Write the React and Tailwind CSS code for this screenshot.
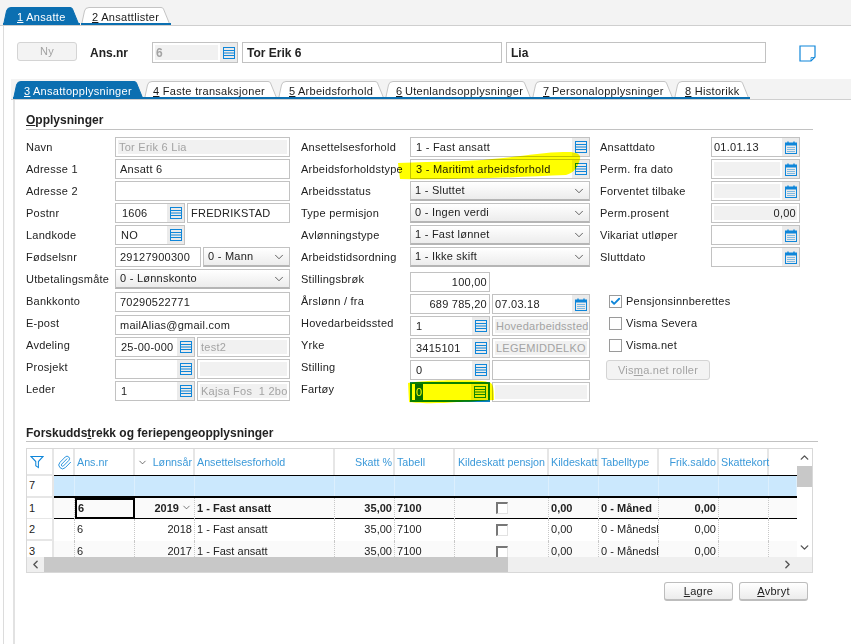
import React from 'react';
import { Paperclip, ChevronDown, ChevronUp, ChevronLeft, ChevronRight, Check } from 'lucide-react';

const BLUE = '#0f86d9';

function ListIcon() {
  return (
    <svg width="12" height="12" viewBox="0 0 12 12" fill="none" stroke={BLUE} strokeWidth="1">
      <rect x="0.5" y="0.5" width="11" height="11" />
      <path d="M0 3.5H12M0 6H12M0 8.5H12" />
    </svg>
  );
}

function CalendarIcon() {
  return (
    <svg width="12" height="13" viewBox="0 0 12 13" fill="none">
      <rect x="0.5" y="2" width="11" height="10.5" stroke={BLUE} />
      <rect x="0" y="2" width="12" height="2.5" fill={BLUE} />
      <path d="M3 0.5V3M9 0.5V3" stroke={BLUE} strokeWidth="1.4" />
      <path d="M2.5 6.5H10M2.5 8.5H10M2.5 10.5H10" stroke={BLUE} strokeDasharray="1 1" />
    </svg>
  );
}

function FilterIcon() {
  return (
    <svg width="14" height="14" viewBox="0 0 15 15" fill="none" stroke={BLUE} strokeWidth="1.1">
      <path d="M1 1.5H14L9 7V13.5L6.2 11.5V7Z" />
    </svg>
  );
}

function NoteIcon() {
  return (
    <svg width="17" height="17" viewBox="0 0 17 17" fill="none" stroke={BLUE} strokeWidth="1.2">
      <path d="M1 1H16V12L12 16H1Z" />
      <path d="M12 16V12.5H16" strokeWidth="0.8" />
    </svg>
  );
}

function Tab({ width, active, num, text, spaced, pad = 'pl-[11px]' }) {
  const h = 18;
  const d = `M0.5 ${h}L3.5 4Q4.2 0.5 8 0.5H${width - 10}Q${width - 8} 0.5 ${width - 7.5} 2L${width - 1} ${h}`;
  return (
    <div className="relative h-[18px] shrink-0" style={{ width }}>
      <svg className="absolute left-0 top-0" width={width} height={h} fill={active ? '#0b6fb1' : '#fff'} stroke={active ? '#0b6fb1' : '#c4c4c4'}>
        <path d={d} />
        <rect x="0" y="16" width={width} height="2" fill="#0b6fb1" stroke="none" />
      </svg>
      <div className={`relative ${pad} pt-[3px] leading-[14px] whitespace-nowrap text-[11px] tracking-[0.3px] ${active ? 'text-white' : 'text-[#1c1c1c]'}`}>
        <u>{num}</u>
        {spaced ? ' ' : '\u2009'}
        {text}
      </div>
    </div>
  );
}

function Lookup({ date }) {
  return (
    <div className="w-[17px] h-full shrink-0 bg-[#ebebeb] flex items-center justify-center">
      {date ? <CalendarIcon /> : <ListIcon />}
    </div>
  );
}

function Field({ value, w = 'flex-1', gray, right, lookup, date, pad = 'px-1', muted, bold }) {
  return (
    <div className={`${w} h-[20px] min-w-0 border border-[#c2c2c2] flex bg-white`}>
      <div className={`flex-1 min-w-0 flex items-center whitespace-pre ${gray ? 'm-[2px] bg-[#f1f1f1] px-[1px]' : `${pad} overflow-hidden`} ${right ? 'justify-end' : ''} ${muted ? 'text-[#a3a3a3]' : ''} ${bold ? 'font-bold text-[12px] tracking-normal' : ''}`}>
        {value}
      </div>
      {(lookup || date) && <Lookup date={date} />}
    </div>
  );
}

function Select({ value, w = 'flex-1' }) {
  return (
    <div className={`${w} h-[20px] border border-[#c2c2c2] border-b-2 border-b-[#b5b5b5] bg-gradient-to-b from-white to-[#ececec] flex items-center justify-between pl-1 pr-[3px]`}>
      <span className="whitespace-nowrap">{value}</span>
      <ChevronDown size={14} strokeWidth={1.3} color="#333" />
    </div>
  );
}

function Row({ label, width, up = '', children }) {
  return (
    <div className="flex h-[20px] gap-0 relative">
      <div className={`${width} shrink-0 flex items-center whitespace-nowrap ${up}`}>{label}</div>
      <div className="flex-1 flex gap-[2px] min-w-0">{children}</div>
    </div>
  );
}

function CheckRow({ label, checked }) {
  return (
    <div className="flex items-center gap-[4px] h-[13px] pl-[3px]">
      <div className="w-[13px] h-[13px] border border-[#9a9a9a] flex items-center justify-center bg-white">
        {checked && <Check size={11} strokeWidth={4} color={BLUE} />}
      </div>
      <span className="whitespace-nowrap">{label}</span>
    </div>
  );
}

function FirstColumn() {
  const w = 'w-[89px]';
  return (
    <div className="w-[264px] shrink-0 flex flex-col gap-[2px]">
      <Row label="Navn" width={w}><Field value="Tor Erik 6 Lia" gray muted /></Row>
      <Row label="Adresse 1" width={w}><Field value="Ansatt 6" /></Row>
      <Row label="Adresse 2" width={w}><Field value="" /></Row>
      <Row label="Postnr" width={w}>
        <Field value="1606" w="w-[70px]" lookup pad="px-[6px]" />
        <Field value="FREDRIKSTAD" pad="px-[3px]" />
      </Row>
      <Row label="Landkode" width={w}><Field value="NO" w="w-[70px]" lookup pad="px-[5px]" /><div className="flex-1" /></Row>
      <Row label="Fødselsnr" width={w}>
        <Field value="29127900300" w="w-[86px]" />
        <Select value="0 - Mann" />
      </Row>
      <Row label="Utbetalingsmåte" width={w}><Select value="0 - Lønnskonto" /></Row>
      <div className="mt-[1px]">
        <Row label="Bankkonto" width={w} up="pb-[2px]"><Field value="70290522771" /></Row>
      </div>
      <div className="mt-[1px]">
        <Row label="E-post" width={w} up="pb-[4px]"><Field value="mailAlias@gmail.com" /></Row>
      </div>
      <Row label="Avdeling" width={w} up="pb-[4px]">
        <Field value="25-00-000" w="w-[80px]" lookup pad="px-[5px]" />
        <Field value="test2" gray muted />
      </Row>
      <Row label="Prosjekt" width={w} up="pb-[4px]">
        <Field value="" w="w-[80px]" lookup />
        <Field value="" gray />
      </Row>
      <Row label="Leder" width={w} up="pb-[4px]">
        <Field value="1" w="w-[80px]" lookup pad="px-[5px]" />
        <Field value="Kajsa Fos  1 2bo" gray muted />
      </Row>
    </div>
  );
}

function SecondColumn() {
  const w = 'w-[109px]';
  const up = 'pb-[6px]';
  return (
    <div className="w-[299px] pr-[10px] shrink-0 flex flex-col gap-[2px]">
      <Row label="Ansettelsesforhold" width={w}><Field value="1 - Fast ansatt" lookup pad="px-[5px]" /></Row>
      <Row label="Arbeidsforholdstype" width={w}>
        <Field value="3 - Maritimt arbeidsforhold" lookup pad="px-[5px]" />
        {/* marker stroke drawn on top of the screenshot */}
        <svg className="absolute left-[97px] top-[-8px] mix-blend-multiply pointer-events-none" width="184" height="30" viewBox="0 0 184 30">
          <path d="M0 12C40 10 70 11 94 8C120 6 150 0 170 1C180 1 183 4 182 8C180 16 176 22 168 24C120 26 60 29 2 28Z" fill="#ffff00" />
        </svg>
      </Row>
      <Row label="Arbeidsstatus" width={w}><Select value="1 - Sluttet" /></Row>
      <Row label="Type permisjon" width={w}><Select value="0 - Ingen verdi" /></Row>
      <Row label="Avlønningstype" width={w}><Select value="1 - Fast lønnet" /></Row>
      <Row label="Arbeidstidsordning" width={w}><Select value="1 - Ikke skift" /></Row>
      <div className="mt-[3px]">
        <Row label="Stillingsbrøk" width={w} up={up}>
          <Field value="100,00" w="w-[80px]" right pad="px-[2px]" /><div className="flex-1" />
        </Row>
      </div>
      <Row label="Årslønn / fra" width={w} up={up}>
        <Field value="689 785,20" w="w-[80px]" right pad="px-[2px]" />
        <Field value="07.03.18" date pad="px-[2px]" />
      </Row>
      <Row label="Hovedarbeidssted" width={w} up={up}>
        <Field value="1" w="w-[80px]" lookup pad="px-[5px]" />
        <Field value="Hovedarbeidssted" gray muted />
      </Row>
      <Row label="Yrke" width={w} up={up}>
        <Field value="3415101" w="w-[80px]" lookup pad="px-[5px]" />
        <Field value="LEGEMIDDELKO" gray muted />
      </Row>
      <Row label="Stilling" width={w} up={up}>
        <Field value="0" w="w-[80px]" lookup pad="px-[5px]" />
        <Field value="" />
      </Row>
      <Row label="Fartøy" width={w} up={up}>
        <div className="w-[80px] h-[20px] border-2 border-[#0a7fc8] flex bg-white">
          <div className="flex-1 flex items-center pl-[3px]">
            <span className="bg-[#0a6cc8] text-white px-[1px]">0</span>
          </div>
          <Lookup />
        </div>
        <Field value="" gray />
        <svg className="absolute left-[106px] top-[-2px] mix-blend-multiply pointer-events-none" width="88" height="24" viewBox="0 0 88 24">
          <path d="M1 3C10 0 78 -1 80 2C86 2 87 6 87 20C70 21 60 22 50 22C30 24 4 23 2 22Z" fill="#ffff00" />
        </svg>
      </Row>
    </div>
  );
}

function ThirdColumn() {
  const w = 'w-[111px]';
  return (
    <div className="w-[200px] shrink-0 flex flex-col gap-[2px]">
      <Row label="Ansattdato" width={w}><Field value="01.01.13" date pad="px-[2px]" /></Row>
      <Row label="Perm. fra dato" width={w}><Field value="" gray date /></Row>
      <Row label="Forventet tilbake" width={w}><Field value="" gray date /></Row>
      <Row label="Perm.prosent" width={w}><Field value="0,00" gray right /></Row>
      <Row label="Vikariat utløper" width={w}><Field value="" date /></Row>
      <Row label="Sluttdato" width={w}><Field value="" date /></Row>
      <div className="flex flex-col gap-[9px] mt-[26px] pl-[6px]">
        <CheckRow label="Pensjonsinnberettes" checked />
        <CheckRow label="Visma Severa" />
        <CheckRow label="Visma.net" />
      </div>
      <div className="mt-[6px] pl-[6px]">
        <div className="w-[104px] h-[20px] border border-[#d4d4d4] rounded-[3px] bg-[#f3f3f3] text-[#a3a3a3] flex items-center justify-center">
          <span>Vis<u>m</u>a.net roller</span>
        </div>
      </div>
    </div>
  );
}

// column widths for header and data rows of the grid
const GRID = 'grid grid-cols-[27px_21px_60px_60px_140px_60px_60px_94px_50px_60px_60px_50px_28px]';

const rows = [
  { n: '1', bg: 'bg-[#fafafa]', h: 'h-[21px] border-b border-black', year: '2019', bold: true, type: '0 - Måned' },
  { n: '2', bg: 'bg-white', h: 'h-[22px]', year: '2018', type: '0 - Månedsl' },
  { n: '3', bg: 'bg-[#fafafa]', h: 'h-[22px]', year: '2017', type: '0 - Månedsl' },
];

const cell = 'border-r border-dotted border-[#c8c8c8] flex items-center px-[2px] pb-[1px] overflow-hidden whitespace-nowrap';
const headCell = 'border-r-2 border-[#e6e6e6] flex items-center pl-[2px] pr-[1px] whitespace-nowrap text-[#3b99d9] text-[10.7px]';

function DataRow({ row }) {
  return (
    <div className={`${GRID} ${row.h} ${row.bg} ${row.bold ? 'font-bold' : ''}`}>
      <div className={`relative z-10 bg-white border-r-2 border-b-2 border-[#e6e6e6] flex items-center pl-[2px] font-normal ${row.bold ? '-mb-[1px]' : ''}`}>{row.n}</div>
      <div className={cell} />
      <div className={row.bold ? 'border-2 border-black flex items-center px-[1px]' : cell}>6</div>
      <div className={`${cell} justify-end`}>
        {row.year}
        {row.bold && <ChevronDown size={11} strokeWidth={1.4} color="#333" className="ml-[2px]" />}
      </div>
      <div className={cell}>1 - Fast ansatt</div>
      <div className={`${cell} justify-end`}>35,00</div>
      <div className={cell}>7100</div>
      <div className={`${cell} justify-center`}>
        <div className="w-[12px] h-[12px] border-t-2 border-l-2 border-[#777] border-r border-b border-r-[#e2e2e2] border-b-[#e2e2e2] bg-white" />
      </div>
      <div className={cell}>0,00</div>
      <div className={cell}>{row.type}</div>
      <div className={`${cell} justify-end`}>0,00</div>
      <div className={cell} />
      <div />
    </div>
  );
}

function EmployeeGrid() {
  return (
    <div className="w-[787px] h-[125px] border border-[#d8d8d8] flex flex-col bg-white tracking-[0.02px]">
      <div className="flex h-[108px] shrink-0">
        <div className="w-[770px] overflow-hidden shrink-0">
          <div className={`${GRID} h-[27px] border-b border-black`}>
            <div className={`${headCell} relative z-10 bg-white -mb-[1px] border-b-2 pl-[3px]`}><FilterIcon /></div>
            <div className={`${headCell} justify-center`}><Paperclip size={15} strokeWidth={1.4} color={BLUE} /></div>
            <div className={headCell}>Ans.nr</div>
            <div className={`${headCell} justify-between`}>
              <ChevronDown size={11} strokeWidth={1.5} color="#333" />
              Lønnsår
            </div>
            <div className={headCell}>Ansettelsesforhold</div>
            <div className={`${headCell} justify-end`}>Skatt %</div>
            <div className={headCell}>Tabell</div>
            <div className={`${headCell} justify-center`}>Kildeskatt pensjon</div>
            <div className={headCell}>Kildeskatt</div>
            <div className={headCell}>Tabelltype</div>
            <div className={`${headCell} justify-end`}>Frik.saldo</div>
            <div className={headCell}>Skattekort</div>
            <div />
          </div>
          <div className={`${GRID} h-[22px] border-b-2 border-black`}>
            <div className="relative z-10 -mb-[2px] bg-white border-r-2 border-b-2 border-[#e6e6e6] flex items-center pl-[2px] pb-[2px]">7</div>
            {Array.from({ length: 12 }).map((_, i) => (
              <div key={i} className="bg-[#cbe8fd] border-r border-[#dceffd]" />
            ))}
          </div>
          {rows.map((row) => <DataRow key={row.n} row={row} />)}
        </div>
        <div className="flex-1 flex flex-col items-center justify-between relative">
          <ChevronUp size={13} strokeWidth={2.6} color="#555" className="mt-[2px]" />
          <div className="absolute left-0 top-[17px] w-[15px] h-[21px] bg-[#c8c8c8]" />
          <ChevronDown size={13} strokeWidth={2.6} color="#555" className="mb-[3px]" />
        </div>
      </div>
      <div className="flex-1 flex items-center bg-[#efefef]">
        <div className="w-[17px] flex justify-center"><ChevronLeft size={13} strokeWidth={2.6} color="#555" /></div>
        <div className="w-[464px] h-full bg-[#c8c8c8]" />
        <div className="flex-1 flex justify-end pr-[18px]"><ChevronRight size={13} strokeWidth={2.6} color="#555" /></div>
      </div>
    </div>
  );
}

function ActionButton({ first, rest }) {
  return (
    <div className="w-[69px] h-[19px] border border-[#bdbdbd] border-b-2 rounded-[3px] bg-gradient-to-b from-white to-[#ececec] flex items-center justify-center">
      <span><u>{first}</u>{rest}</span>
    </div>
  );
}

export default function App() {
  return (
    <div className="w-[851px] h-[644px] overflow-hidden bg-white flex flex-col text-[11px] tracking-[0.25px] text-[#222] font-['Liberation_Sans',Arial,sans-serif]">
      <div className="h-[26px] shrink-0 bg-[#f3f3f3] border-b border-[#cfcfcf] pt-[7px] pl-[3px] flex gap-[1px]">
        <Tab width={77} active num="1" text="Ansatte" spaced pad="pl-[14px]" />
        <Tab width={90} num="2" text="Ansattlister" spaced />
      </div>
      <div className="flex-1 ml-[3px] border-l border-[#dcdcdc] flex flex-col min-h-0">
        <div className="flex items-start pt-[16px] pl-[13px] h-[53px] shrink-0">
          <div className="w-[60px] h-[19px] border border-[#d4d4d4] rounded-[3px] bg-[#f3f3f3] text-[#a3a3a3] flex items-center justify-center">Ny</div>
          <div className="w-[75px] pl-[13px] h-[21px] flex items-center font-bold text-[12px] tracking-normal">Ans.nr</div>
          <div className="flex gap-[4px] h-[21px] [&>div]:h-[21px]">
            <Field value="6" w="w-[86px]" gray muted lookup bold />
            <Field value="Tor Erik 6" w="w-[260px]" bold />
            <Field value="Lia" w="w-[260px]" bold />
          </div>
          <div className="ml-[33px] mt-[3px]"><NoteIcon /></div>
        </div>
        <div className="ml-[7px] h-[21px] shrink-0 bg-[#f3f3f3] pt-[2px] pl-[2px] flex border-b border-[#cfcfcf]">
          <Tab width={131} active num="3" text="Ansattopplysninger" />
          <Tab width={134} num="4" text="Faste transaksjoner" spaced pad="pl-[9px]" />
          <Tab width={107} num="5" text="Arbeidsforhold" />
          <Tab width={147} num="6" text="Utenlandsopplysninger" />
          <Tab width={142} num="7" text="Personalopplysninger" />
          <Tab width={76} num="8" text="Historikk" spaced />
        </div>
        <div className="flex-1 ml-[9px] border-l-2 border-[#e2e2e2] pl-[11px] pt-[13px] flex flex-col min-h-0">
          <div className="w-[787px] h-[17px] border-b border-[#c2c2c2] font-bold text-[12px] tracking-normal leading-[14px]">
            <u>O</u>pplysninger
          </div>
          <div className="flex mt-[7px]">
            <FirstColumn />
            <div className="w-[11px] shrink-0" />
            <SecondColumn />
            <ThirdColumn />
          </div>
          <div className="w-[792px] h-[18px] mt-[22px] pt-[2px] border-b border-[#c2c2c2] font-bold text-[12px] tracking-normal leading-[14px]">
            Forskudds<u>t</u>rekk og feriepengeopplysninger
          </div>
          <div className="mt-[6px]"><EmployeeGrid /></div>
          <div className="w-[782px] flex justify-end gap-[6px] mt-[9px]">
            <ActionButton first="L" rest="agre" />
            <ActionButton first="A" rest="vbryt" />
          </div>
        </div>
      </div>
    </div>
  );
}
